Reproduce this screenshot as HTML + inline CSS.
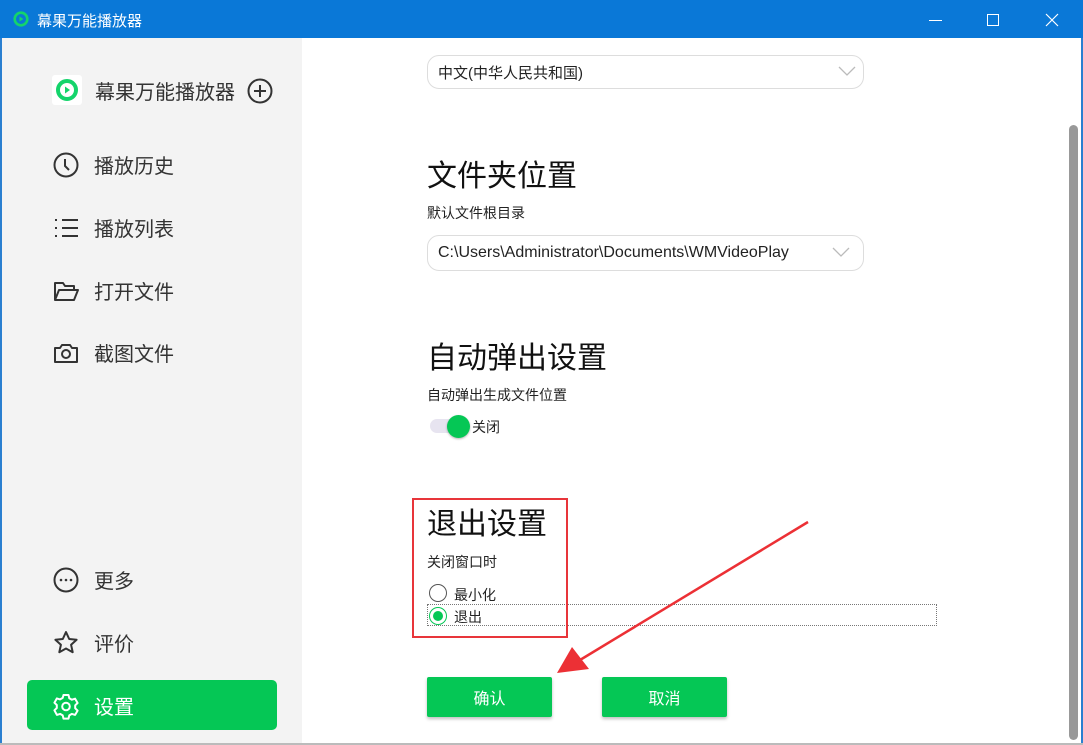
<!DOCTYPE html>
<html><head><meta charset="utf-8"><style>
*{margin:0;padding:0;box-sizing:border-box}
body{width:1083px;height:745px;overflow:hidden;background:#fff;font-family:"Liberation Sans","Noto Sans CJK SC",sans-serif;position:relative;color:#222}
.title{position:absolute;left:0;top:0;width:1083px;height:38px;background:#0a78d7;color:#fff;font-size:15px}
.bl{position:absolute;left:0;top:38px;width:2px;height:707px;background:#2a7fd0}
.side{position:absolute;left:2px;top:38px;width:300px;height:707px;background:#f3f3f3}
.item{position:absolute;left:52px;font-size:20px;color:#333;display:flex;align-items:center}
.item svg{margin-right:14px}
.abs{position:absolute}
.combo{position:absolute;left:427px;width:437px;border:1px solid #ddd;border-radius:12px;background:#fff;font-size:15px;color:#222;padding-left:10px;display:flex;align-items:center}
.h{position:absolute;left:427px;font-size:30px;color:#111}
.s{position:absolute;left:427px;font-size:14px;color:#222}
.btn{position:absolute;top:677px;width:125px;height:40px;background:#05c755;color:#fff;font-size:16px;display:flex;align-items:center;justify-content:center;border-radius:2px;box-shadow:0 2px 3px rgba(0,0,0,.25)}
</style></head><body>
<div class="title">
 <svg class="abs" style="left:13px;top:11px" width="16" height="16" viewBox="0 0 16 16"><circle cx="8" cy="8" r="6.3" fill="none" stroke="#14d46b" stroke-width="2.6"/><path d="M6.5 5.5L10.5 8L6.5 10.5Z" fill="#14d46b"/></svg>
 <span class="abs" style="left:37px;top:10px">幕果万能播放器</span>
 <div class="abs" style="left:929px;top:20px;width:13px;height:1px;background:#fff"></div>
 <div class="abs" style="left:987px;top:14px;width:12px;height:12px;border:1px solid #fff"></div>
 <svg class="abs" style="left:1045px;top:13px" width="14" height="14"><path d="M1 1L13 13M13 1L1 13" stroke="#fff" stroke-width="1.2"/></svg>
</div>
<div class="bl"></div>
<div class="side"></div>
<div class="abs" style="left:52px;top:75px;width:30px;height:30px;background:#fff;border-radius:3px"></div>
<svg class="abs" style="left:55px;top:78px" width="24" height="24" viewBox="0 0 24 24"><circle cx="12" cy="12" r="9" fill="none" stroke="#14d46b" stroke-width="4"/><path d="M10 8.5L15 12L10 15.5Z" fill="#14d46b"/></svg>
<div class="abs" style="left:95px;top:76px;font-size:20px;color:#333">幕果万能播放器</div>
<svg class="abs" style="left:246px;top:77px" width="28" height="28" viewBox="0 0 28 28"><circle cx="14" cy="14" r="11.5" fill="none" stroke="#333" stroke-width="2"/><path d="M14 8v12M8 14h12" stroke="#333" stroke-width="2"/></svg>

<div class="item" style="top:150px"><svg width="28" height="28" viewBox="0 0 28 28"><circle cx="14" cy="14" r="11.5" fill="none" stroke="#333" stroke-width="2"/><path d="M13 8v7l4 4" fill="none" stroke="#333" stroke-width="2"/></svg>播放历史</div>
<div class="item" style="top:213px"><svg width="28" height="28" viewBox="0 0 28 28"><path d="M3 6h2M3 14h2M3 22h2M10 6h16M10 14h16M10 22h16" stroke="#333" stroke-width="2"/></svg>播放列表</div>
<div class="item" style="top:276px"><svg width="28" height="28" viewBox="0 0 28 28"><path d="M3 23V6h8l2 3h9v4M3 23l4-10h19l-4 10Z" fill="none" stroke="#333" stroke-width="2" stroke-linejoin="round"/></svg>打开文件</div>
<div class="item" style="top:338px"><svg width="28" height="28" viewBox="0 0 28 28"><path d="M3 9h5l2-3h8l2 3h5v14H3Z" fill="none" stroke="#333" stroke-width="2" stroke-linejoin="round"/><circle cx="14" cy="15" r="4" fill="none" stroke="#333" stroke-width="2"/></svg>截图文件</div>
<div class="item" style="top:565px"><svg width="28" height="28" viewBox="0 0 28 28"><circle cx="14" cy="14" r="11.5" fill="none" stroke="#333" stroke-width="2"/><circle cx="9" cy="14" r="1.3" fill="#333"/><circle cx="14" cy="14" r="1.3" fill="#333"/><circle cx="19" cy="14" r="1.3" fill="#333"/></svg>更多</div>
<div class="item" style="top:628px"><svg width="28" height="28" viewBox="0 0 28 28"><path d="M14 3l3.2 7 7.4.8-5.5 5 1.6 7.4L14 19.5 7.3 23.2l1.6-7.4-5.5-5 7.4-.8Z" fill="none" stroke="#333" stroke-width="2" stroke-linejoin="round"/></svg>评价</div>
<div class="abs" style="left:27px;top:680px;width:250px;height:50px;background:#05c755;border-radius:5px"></div>
<div class="item" style="top:691px;color:#fff"><svg width="28" height="28" viewBox="0 0 28 28"><path d="M11.5 3h5l.8 3.2 2.6 1.5 3.2-1 2.5 4.3-2.4 2.3v3l2.4 2.3-2.5 4.3-3.2-1-2.6 1.5-.8 3.2h-5l-.8-3.2-2.6-1.5-3.2 1L2.4 18.3 4.8 16v-3L2.4 10.7 4.9 6.4l3.2 1 2.6-1.5Z" fill="none" stroke="#fff" stroke-width="2" stroke-linejoin="round"/><circle cx="14" cy="14.5" r="3.8" fill="none" stroke="#fff" stroke-width="2"/></svg>设置</div>

<div class="combo" style="top:55px;height:34px">中文(中华人民共和国)</div>
<svg class="abs" style="left:838px;top:64px" width="18" height="14"><path d="M1 3l8 8 8-8" fill="none" stroke="#bbb" stroke-width="1.3"/></svg>
<div class="h" style="top:151px">文件夹位置</div>
<div class="s" style="top:203px">默认文件根目录</div>
<div class="combo" style="top:235px;height:36px;font-size:16px">C:\Users\Administrator\Documents\WMVideoPlay</div>
<svg class="abs" style="left:832px;top:245px" width="18" height="14"><path d="M1 3l8 8 8-8" fill="none" stroke="#bbb" stroke-width="1.3"/></svg>
<div class="h" style="top:333px">自动弹出设置</div>
<div class="s" style="top:385px">自动弹出生成文件位置</div>
<div class="abs" style="left:430px;top:419px;width:32px;height:14px;background:#e7e4f0;border-radius:7px"></div>
<div class="abs" style="left:447px;top:415px;width:23px;height:23px;background:#05c755;border-radius:50%;box-shadow:0 1px 2px rgba(0,0,0,.3)"></div>
<div class="s" style="left:472px;top:417px">关闭</div>

<div class="h" style="top:499px">退出设置</div>
<div class="s" style="top:552px">关闭窗口时</div>
<div class="abs" style="left:429px;top:584px;width:18px;height:18px;border:1.5px solid #555;border-radius:50%"></div>
<div class="s" style="left:454px;top:585px">最小化</div>
<div class="abs" style="left:427px;top:604px;width:510px;height:22px;border:1px dotted #777"></div>
<div class="abs" style="left:429px;top:607px;width:18px;height:18px;border:1.5px solid #05c755;border-radius:50%"></div>
<div class="abs" style="left:433px;top:611px;width:10px;height:10px;background:#05c755;border-radius:50%"></div>
<div class="s" style="left:454px;top:607px">退出</div>
<div class="abs" style="left:412px;top:498px;width:156px;height:140px;border:2px solid #e8353a"></div>

<div class="btn" style="left:427px">确认</div>
<div class="btn" style="left:602px">取消</div>

<svg class="abs" style="left:0;top:0" width="1083" height="745"><path d="M808 522L580 660" stroke="#ec3035" stroke-width="2.5"/><path d="M557 673L572 647L589 669Z" fill="#ec3035"/></svg>

<div class="abs" style="left:1069px;top:125px;width:9px;height:615px;background:#999;border-radius:5px"></div>
<div class="abs" style="left:1081px;top:38px;width:2px;height:707px;background:#2a7fd0"></div>
<div class="abs" style="left:0;top:743px;width:1083px;height:2px;background:#bbb"></div>
</body></html>
